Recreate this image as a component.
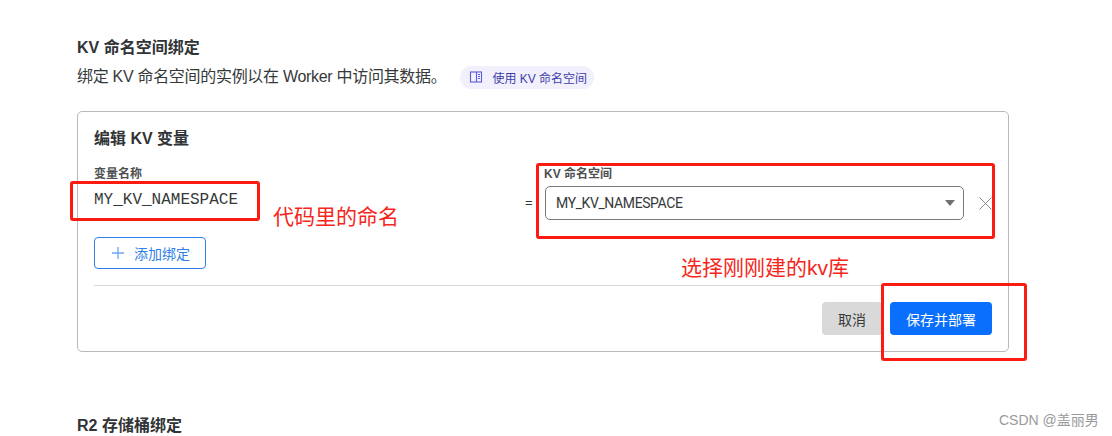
<main class="page">
  <section class="binding">
    <h2 class="heading">KV 命名空间绑定</h2>
    <div class="desc-row">
      <p class="desc">绑定 KV 命名空间的实例以在 Worker 中访问其数据。</p>
      <a class="pill" href="#docs">
        <svg width="14" height="14" viewBox="0 0 14 14" fill="none" stroke="#5b5bd6" stroke-width="1.1">
          <rect x="1.5" y="2" width="11" height="10" />
          <path d="M7.5 2v10M9 4.5h2M9 6.5h2M9 8.5h2" />
        </svg>
        <span>使用 KV 命名空间</span>
      </a>
    </div>

    <div class="card">
      <h3 class="card-title">编辑 KV 变量</h3>
      <div class="fields">
        <div class="name-col">
          <span class="label">变量名称</span>
          <span class="mono">MY_KV_NAMESPACE</span>
        </div>
        <span class="eq">=</span>
        <div class="ns-col">
          <span class="label ns-label">KV 命名空间</span>
          <div class="select-row">
            <div class="select">
              <span>MY_KV_NAMESPACE</span>
              <svg width="10" height="6" viewBox="0 0 10 6"><path d="M0 0h10L5 6z" fill="#707070" /></svg>
            </div>
            <svg class="close" width="13" height="13" viewBox="0 0 13 13" fill="none" stroke="#8a8a8a" stroke-width="1">
              <path d="M.5 .5l12 12M12.5 .5l-12 12" />
            </svg>
          </div>
        </div>
      </div>
      <button class="add">
        <svg width="12" height="12" viewBox="0 0 12 12" fill="none" stroke="#6ba5f5" stroke-width="1.3">
          <path d="M6 0v12M0 6h12" />
        </svg>
        <span>添加绑定</span>
      </button>
      <div class="actions">
        <button class="cancel">取消</button>
        <button class="save">保存并部署</button>
      </div>
    </div>

    <h2 class="heading next">R2 存储桶绑定</h2>
  </section>

  <div class="mark m1"></div>
  <div class="mark m2"></div>
  <div class="mark m3"></div>
  <span class="note n1">代码里的命名</span>
  <span class="note n2">选择刚刚建的kv库</span>
  <span class="wm">CSDN @盖丽男</span>
</main>

<style>
  :global(body) {
    margin: 0;
    background: #fff;
  }
  .page {
    position: relative;
    width: 1112px;
    height: 436px;
    overflow: hidden;
    font-family: "Liberation Sans", "Noto Sans CJK SC", sans-serif;
    color: #36393a;
  }
  .binding {
    width: 932px;
    padding: 38px 0 0 77px;
  }
  .heading {
    margin: 0;
    font-size: 16px;
    line-height: 20px;
    font-weight: 700;
    color: #313436;
  }
  .desc-row {
    display: flex;
    align-items: center;
    gap: 14px;
    margin-top: 7px;
    height: 24px;
  }
  .desc {
    margin: 0;
    font-size: 16px;
    line-height: 20px;
    letter-spacing: -0.3px;
    white-space: nowrap;
  }
  .pill {
    display: flex;
    align-items: center;
    gap: 9px;
    height: 23px;
    padding: 0 7px 0 9px;
    border-radius: 12px;
    background: #f2f0fd;
    color: #3d3ea8;
    font-size: 12px;
    text-decoration: none;
    white-space: nowrap;
  }
  .card {
    box-sizing: border-box;
    height: 241px;
    margin-top: 22px;
    padding: 16px;
    border: 1px solid #b9b9b9;
    border-radius: 5px;
  }
  .card-title {
    margin: 0;
    font-size: 16px;
    line-height: 22px;
    font-weight: 700;
    color: #313436;
  }
  .fields {
    display: flex;
    align-items: flex-start;
    margin-top: 17px;
  }
  .name-col {
    display: flex;
    flex-direction: column;
    width: 431px;
  }
  .label {
    font-size: 12px;
    line-height: 14px;
    font-weight: 700;
    color: #4d4f50;
  }
  .ns-label {
    margin-left: -1px;
  }
  .mono {
    margin-top: 9px;
    font-family: "Liberation Mono", monospace;
    font-size: 16px;
    line-height: 20px;
    white-space: nowrap;
  }
  .eq {
    margin-top: 27px;
    width: 20px;
    font-size: 13px;
    line-height: 18px;
  }
  .ns-col {
    display: flex;
    flex-direction: column;
  }
  .select-row {
    display: flex;
    align-items: center;
    gap: 15px;
    margin-top: 5px;
  }
  .select {
    box-sizing: border-box;
    display: flex;
    align-items: center;
    justify-content: space-between;
    width: 419px;
    height: 34px;
    padding: 0 8px 0 10px;
    border: 1px solid #7a7a7a;
    border-radius: 5px;
    font-family: Roboto, sans-serif;
    font-size: 14px;
    letter-spacing: -0.4px;
  }
  .add {
    box-sizing: border-box;
    display: flex;
    align-items: center;
    gap: 10px;
    width: 112px;
    height: 32px;
    margin-top: 17px;
    padding: 0 0 0 17px;
    border: 1px solid #2f80ed;
    border-radius: 4px;
    background: #fff;
    color: #2f7fe8;
    font: inherit;
    font-size: 14px;
  }
  .actions {
    display: flex;
    justify-content: flex-end;
    gap: 8px;
    margin-top: 16px;
    padding-top: 16px;
    border-top: 1px solid #d9d9d9;
  }
  .cancel, .save {
    height: 33px;
    border: 0;
    border-radius: 4px;
    font: inherit;
    font-size: 14px;
  }
  .cancel {
    width: 60px;
    background: #d9d9d9;
    color: #36393a;
  }
  .save {
    width: 102px;
    background: #0a6ffd;
    color: #fff;
  }
  .next {
    margin-top: 64px;
  }
  .mark {
    position: absolute;
    box-sizing: border-box;
    border: 3px solid #fb1b10;
    border-radius: 3px;
  }
  .m1 { left: 70px; top: 181px; width: 190px; height: 40px; }
  .m2 { left: 536px; top: 163px; width: 459px; height: 76px; }
  .m3 { left: 881px; top: 283px; width: 146px; height: 78px; }
  .note {
    position: absolute;
    color: #f5271c;
    font-size: 21px;
    line-height: 26px;
    white-space: nowrap;
  }
  .n1 { left: 273px; top: 204px; }
  .n2 { left: 681px; top: 255px; }
  .wm {
    position: absolute;
    left: 999px;
    top: 411px;
    color: #9a9a9a;
    font-size: 14px;
    line-height: 18px;
    white-space: nowrap;
  }
</style>
